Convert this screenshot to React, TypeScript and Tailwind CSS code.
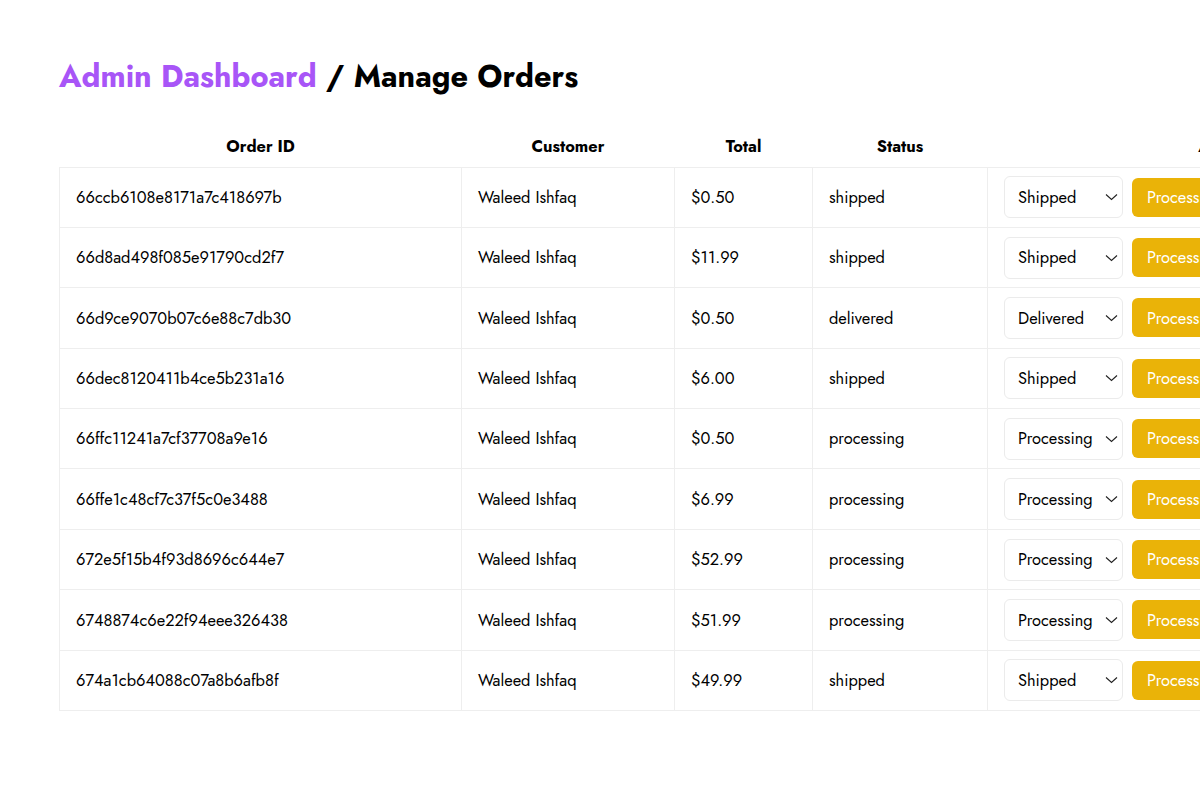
import React from "react";

type Order = {
  id: string;
  customer: string;
  total: string;
  status: "shipped" | "delivered" | "processing";
};

const orders: Order[] = [
  { id: "66ccb6108e8171a7c418697b", customer: "Waleed Ishfaq", total: "$0.50", status: "shipped" },
  { id: "66d8ad498f085e91790cd2f7", customer: "Waleed Ishfaq", total: "$11.99", status: "shipped" },
  { id: "66d9ce9070b07c6e88c7db30", customer: "Waleed Ishfaq", total: "$0.50", status: "delivered" },
  { id: "66dec8120411b4ce5b231a16", customer: "Waleed Ishfaq", total: "$6.00", status: "shipped" },
  { id: "66ffc11241a7cf37708a9e16", customer: "Waleed Ishfaq", total: "$0.50", status: "processing" },
  { id: "66ffe1c48cf7c37f5c0e3488", customer: "Waleed Ishfaq", total: "$6.99", status: "processing" },
  { id: "672e5f15b4f93d8696c644e7", customer: "Waleed Ishfaq", total: "$52.99", status: "processing" },
  { id: "6748874c6e22f94eee326438", customer: "Waleed Ishfaq", total: "$51.99", status: "processing" },
  { id: "674a1cb64088c07a8b6afb8f", customer: "Waleed Ishfaq", total: "$49.99", status: "shipped" },
];

function StatusSelect({ value }: { value: Order["status"] }) {
  return (
    <div className="relative w-[119px] shrink-0">
      <select
        defaultValue={value}
        className="h-[42px] w-full appearance-none rounded-md border border-[#ebebeb] bg-white pl-[13px] pr-7 text-[16.4px] text-black outline-none"
      >
        <option value="processing">Processing</option>
        <option value="shipped">Shipped</option>
        <option value="delivered">Delivered</option>
      </select>
      <svg
        className="pointer-events-none absolute right-[5px] top-1/2 -translate-y-1/2"
        width="13"
        height="8"
        viewBox="0 0 13 8"
        fill="none"
      >
        <path d="M1 1.5 6.5 6.5 12 1.5" stroke="#222" strokeWidth="1.1" />
      </svg>
    </div>
  );
}

export default function App() {
  return (
    <div
      className="min-h-screen w-[1520px] bg-white px-[59px] pt-[57px] text-black"
      style={{ fontFamily: "Jost, Lato, 'Liberation Sans', sans-serif" }}
    >
      <h1 className="mb-[30px] text-[30.7px] font-bold leading-[40px]">
        <span className="text-[#a855f7]">Admin Dashboard</span> / Manage Orders
      </h1>

      <table className="w-[1406px] table-fixed border-collapse text-[16.4px]">
        <colgroup>
          <col className="w-[402px]" />
          <col className="w-[213px]" />
          <col className="w-[138px]" />
          <col className="w-[175px]" />
          <col className="w-[478px]" />
        </colgroup>
        <thead>
          <tr className="h-[40px]">
            <th className="px-4 text-center font-bold">Order ID</th>
            <th className="px-4 text-center font-bold">Customer</th>
            <th className="px-4 text-center font-bold">Total</th>
            <th className="px-4 text-center font-bold">Status</th>
            <th className="px-4 text-center font-bold">Actions</th>
          </tr>
        </thead>
        <tbody>
          {orders.map((o) => (
            <tr key={o.id} className="h-[60.4px]">
              <td className="border border-[#eeeeee] px-4">{o.id}</td>
              <td className="border border-[#eeeeee] px-4">{o.customer}</td>
              <td className="border border-[#eeeeee] px-4">{o.total}</td>
              <td className="border border-[#eeeeee] px-4">{o.status}</td>
              <td className="border border-[#eeeeee] px-4">
                <div className="flex items-center gap-[9px]">
                  <StatusSelect value={o.status} />
                  <button className="h-[39px] rounded-md bg-[#eab308] px-[15px] text-[16.4px] font-normal text-white">
                    Process Order
                  </button>
                </div>
              </td>
            </tr>
          ))}
        </tbody>
      </table>
    </div>
  );
}
